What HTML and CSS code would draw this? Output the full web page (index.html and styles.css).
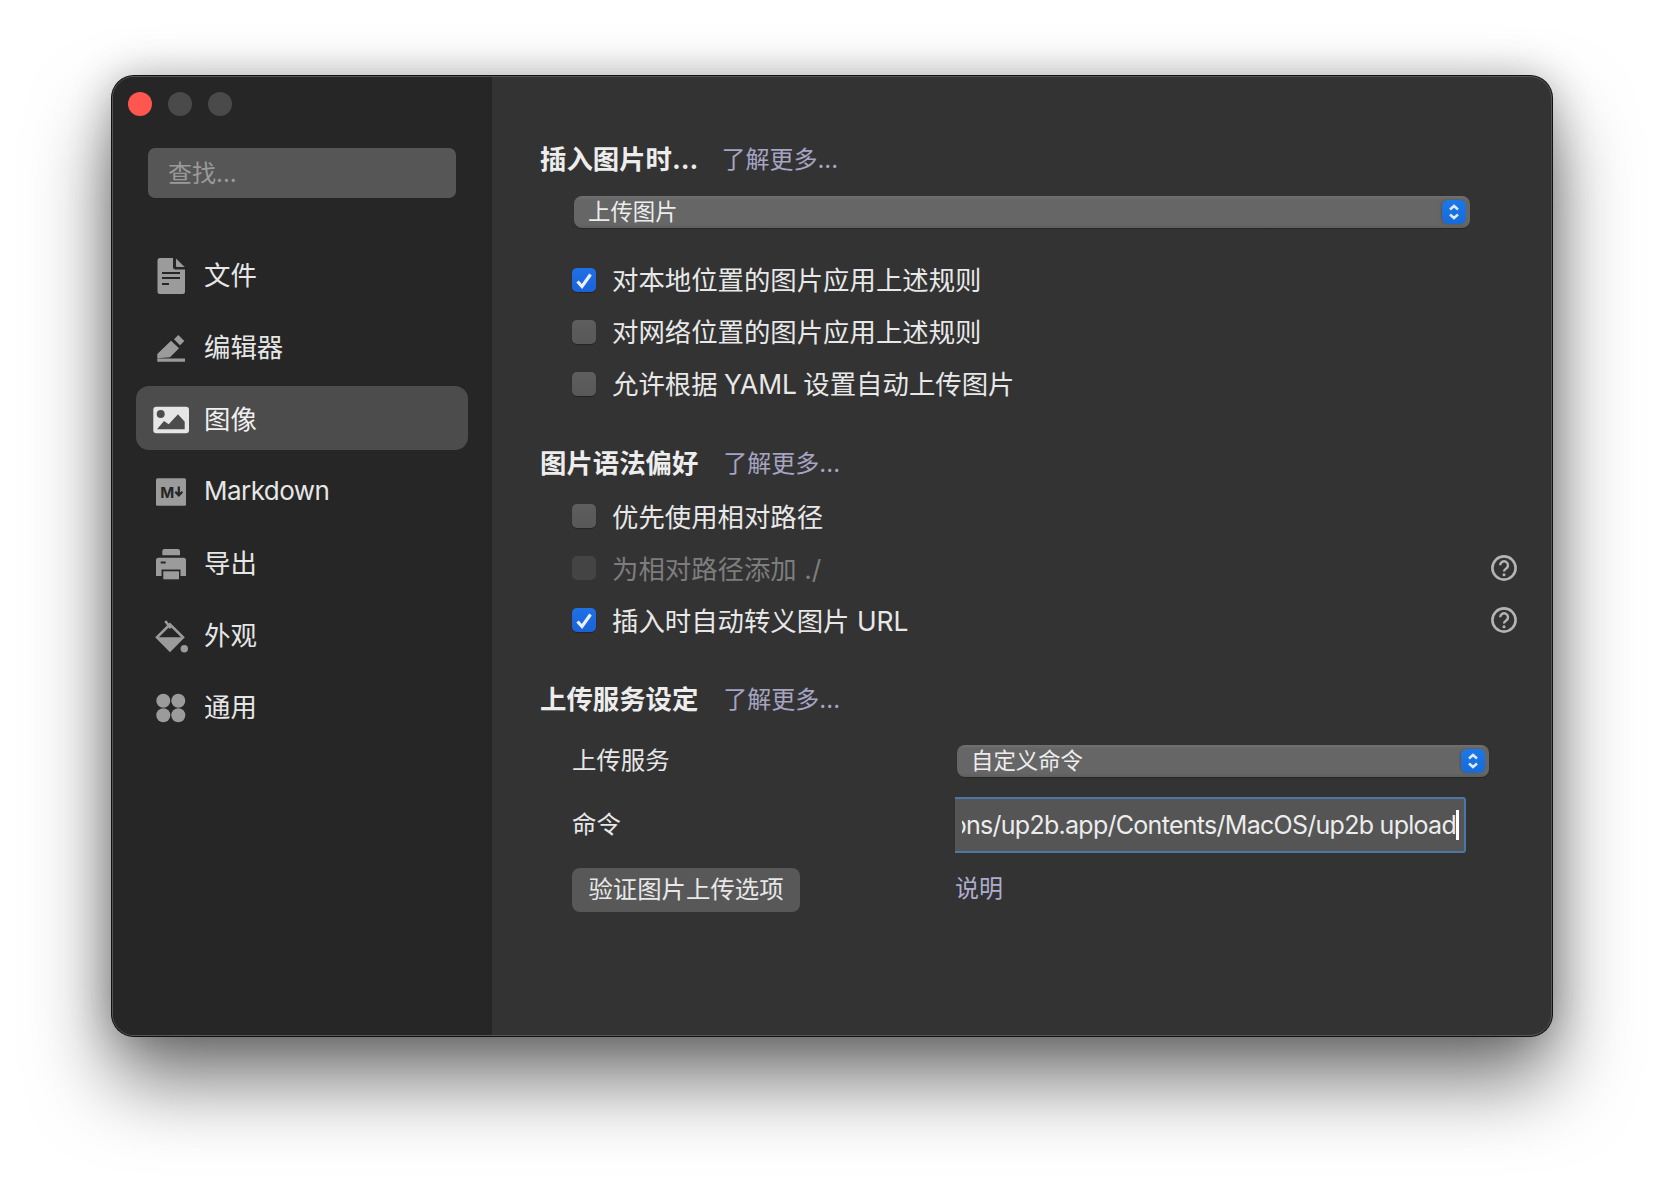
FILE: index.html
```html
<!DOCTYPE html>
<html lang="zh-CN">
<head>
<meta charset="utf-8">
<title>偏好设置</title>
<link rel="stylesheet" href="styles.css">
</head>
<body>
<div class="window">
  <aside class="sidebar">
    <div class="lights"><span class="light red"></span><span class="light"></span><span class="light"></span></div>
    <div class="search">查找...</div>
    <nav class="nav">
      <div class="nav-row">
        <svg class="nav-icon" viewBox="0 0 40 44"><path class="ic" d="M9 6h13v9a2.5 2.5 0 0 0 2.5 2.5H34v22a2.5 2.5 0 0 1-2.5 2.5H9a2.5 2.5 0 0 1-2.5-2.500V8.500A2.500 2.500 0 0 1 9 6z"/><path class="ic" d="M25 6.500L33.700 15H26a1 1 0 0 1-1-1z"/><path class="ic-cut" d="M11 21h18M11 26h18M11 32h7"/></svg>
        <span class="nav-label">文件</span>
      </div>
      <div class="nav-row">
        <svg class="nav-icon" viewBox="0 0 40 44"><path class="ic" d="M6.300 34.300V30L20 16.700l8 7.600-9 9zM23 15.300l4.300-4.300 6 6-4.300 4.300zM6.300 34.500H34v3.200H6.300z"/></svg>
        <span class="nav-label">编辑器</span>
      </div>
      <div class="nav-row active">
        <svg class="nav-icon" viewBox="0 0 40 44"><rect class="ic-on" x="2.300" y="10.700" width="35.700" height="26.600" rx="3"/><circle class="ic-hole" cx="9.700" cy="18" r="4"/><path class="ic-hole" d="M6 33.300L13 25l4.700 3.300 9.300-10 6.700 7.400v7.600z"/></svg>
        <span class="nav-label">图像</span>
      </div>
      <div class="nav-row">
        <svg class="nav-icon" viewBox="0 0 40 44"><rect class="ic" x="5" y="10.300" width="30" height="27.400" rx="1.500"/><text class="md-m" x="9.200" y="29.500">M</text><path class="ic-cut thin" d="M27.800 18.500v8.500M24.300 23.800l3.500 3.700 3.500-3.700"/></svg>
        <span class="nav-latin">Markdown</span>
      </div>
      <div class="nav-row">
        <svg class="nav-icon" viewBox="0 0 40 44"><path class="ic" d="M13.500 9h13.300a2.200 2.200 0 0 1 2.200 2.200v4.100H11.300v-4.100A2.200 2.200 0 0 1 13.500 9z"/><path class="ic" d="M7.500 17.700h25a2.500 2.500 0 0 1 2.500 2.500V36H29.500v-6.500H10.500V36H5V20.200a2.500 2.500 0 0 1 2.500-2.500z"/><rect class="ic" x="12.300" y="31.300" width="15.700" height="8"/><path class="ic-cut" d="M9.700 22.500h5"/></svg>
        <span class="nav-label">导出</span>
      </div>
      <div class="nav-row">
        <svg class="nav-icon" viewBox="0 0 40 44"><path class="ic-line" d="M19 12.300L32 25.300 19 38.300 6 25.300z"/><path class="ic" d="M7 25.300h24L19 38.700z"/><path class="ic-line" d="M14.300 9l5.400 7.300"/><circle class="ic" cx="33.300" cy="36.700" r="3.700"/></svg>
        <span class="nav-label">外观</span>
      </div>
      <div class="nav-row">
        <svg class="nav-icon" viewBox="0 0 40 44"><circle class="ic" cx="12.300" cy="16.700" r="7"/><circle class="ic" cx="27.300" cy="16.700" r="7"/><circle class="ic" cx="12.300" cy="31.300" r="7"/><circle class="ic" cx="27.300" cy="31.300" r="7"/></svg>
        <span class="nav-label">通用</span>
      </div>
    </nav>
  </aside>
  <main class="main">
    <div class="heading heading-1"><b>插入图片时...</b><a class="link">了解更多...</a></div>
    <div class="select select-wide">
      <span>上传图片</span>
      <svg class="stepper" viewBox="0 0 24 24"><path d="M8 9.500l4-3.500 4 3.500M8 14.500l4 3.500 4-3.500"/></svg>
    </div>
    <div class="rows rows-first">
      <div class="row"><span class="check on"><svg viewBox="0 0 24 24"><path d="M5.500 13.500l4.500 5 8.500-12"/></svg></span><span class="row-label">对本地位置的图片应用上述规则</span></div>
      <div class="row"><span class="check"></span><span class="row-label">对网络位置的图片应用上述规则</span></div>
      <div class="row"><span class="check"></span><span class="row-label row-label-mixed">允许根据 YAML 设置自动上传图片</span></div>
    </div>
    <div class="heading heading-2"><b>图片语法偏好</b><a class="link">了解更多...</a></div>
    <div class="rows rows-second">
      <div class="row"><span class="check"></span><span class="row-label">优先使用相对路径</span></div>
      <div class="row disabled"><span class="check"></span><span class="row-label">为相对路径添加 ./</span>
        <svg class="help" viewBox="0 0 26 26"><circle cx="13" cy="13" r="11.600"/><path d="M9.200 10.300a3.900 3.900 0 1 1 6 3.200c-1.400.9-2.200 1.500-2.200 3"/><circle class="dot" cx="13" cy="19.800" r="1.500"/></svg>
      </div>
      <div class="row"><span class="check on"><svg viewBox="0 0 24 24"><path d="M5.500 13.500l4.500 5 8.500-12"/></svg></span><span class="row-label">插入时自动转义图片 URL</span>
        <svg class="help" viewBox="0 0 26 26"><circle cx="13" cy="13" r="11.600"/><path d="M9.200 10.300a3.900 3.900 0 1 1 6 3.200c-1.400.9-2.200 1.500-2.200 3"/><circle class="dot" cx="13" cy="19.800" r="1.500"/></svg>
      </div>
    </div>
    <div class="heading heading-3"><b>上传服务设定</b><a class="link">了解更多...</a></div>
    <div class="form">
      <span class="form-label form-label-top">上传服务</span>
      <div class="select select-service">
        <span>自定义命令</span>
        <svg class="stepper" viewBox="0 0 24 24"><path d="M8 9.500l4-3.500 4 3.500M8 14.500l4 3.500 4-3.500"/></svg>
      </div>
      <span class="form-label">命令</span>
      <div class="input"><div class="input-clip"><span class="input-text">/Applications/up2b.app/Contents/MacOS/up2b upload</span></div><span class="caret"></span></div>
      <button class="btn"><span class="btn-text">验证图片上传选项</span></button>
      <a class="link link-doc">说明</a>
    </div>
  </main>
</div>
</body>
</html>
```
FILE: styles.css
```css
* { box-sizing: border-box; }
html, body { margin: 0; height: 100%; }
body {
  background: #fff;
  padding: 76px 112px;
  font-family: Inter, "Noto Sans CJK SC", sans-serif;
  color: #e8e8e8;
  overflow: hidden;
}
.window {
  width: 1440px;
  height: 960px;
  display: flex;
  border: 1px solid #565656;
  border-radius: 22px;
  overflow: hidden;
  background: #333;
  box-shadow: 0 0 0 1px #111, 0 44px 80px rgba(0,0,0,.55), 0 0 40px rgba(0,0,0,.25);
}
.sidebar {
  width: 379px;
  flex: none;
  background: #262626;
  display: flex;
  flex-direction: column;
}
.lights { display: flex; gap: 16px; padding: 15px 0 0 15px; }
.light { width: 24px; height: 24px; border-radius: 50%; background: #4a4a4a; }
.light.red { background: #ff5650; }
.search {
  margin: 32px 0 0 35px;
  width: 308px;
  height: 50px;
  border-radius: 7px;
  background: #565656;
  color: #9a9a9a;
  font-size: 24px;
  line-height: 52px;
  padding-left: 20px;
}
.nav { display: flex; flex-direction: column; gap: 8px; margin: 44px 0 0 23px; width: 332px; }
.nav-row {
  height: 64px;
  display: flex;
  align-items: center;
  gap: 13px;
  padding-left: 15px;
  border-radius: 13px;
  font-size: 26.4px;
  color: #e6e6e6;
}
.nav-label { padding-bottom: 2px; }
.nav-latin { font-size: 26px; letter-spacing: -.55px; }
.nav-row.active { background: #4c4c4c; color: #f0f0f0; }
.nav-icon { width: 40px; height: 44px; flex: none; }
.ic { fill: #9b9b9b; }
.ic-on { fill: #e6e6e6; }
.ic-hole { fill: #4c4c4c; }
.ic-cut { fill: none; stroke: #262626; stroke-width: 2; }
.ic-cut.thin { stroke-width: 2.2; }
.ic-line { fill: none; stroke: #9b9b9b; stroke-width: 2.6; }
.md-m { font: 700 15px Inter, sans-serif; fill: #262626; }

.main { flex: 1; padding: 67px 34px 0 48px; min-width: 0; }
.heading { display: flex; align-items: center; height: 32px; font-size: 26.4px; line-height: 32px; }
.heading b { font-weight: 700; color: #ededed; margin-right: 25px; padding-bottom: 2px; }
.heading-1 b { margin-right: 23px; }
.heading-2 { margin-top: 38px; }
.heading-3 { margin-top: 38px; }
.link { color: #a6a4c2; font-size: 24px; }

.select {
  position: relative;
  height: 32px;
  border-radius: 8px;
  background: linear-gradient(#707070, #666 12%, #666 88%, #5e5e5e);
  color: #ededed;
  font-size: 22.4px;
  line-height: 32px;
  padding-left: 14px;
  box-shadow: 0 1px 1px rgba(0,0,0,.25);
}
.select-wide { margin: 20px 0 0 34px; width: 896px; }
.select-service { margin-left: 2px; width: 532px; align-self: start; }
.stepper {
  position: absolute;
  right: 4px;
  top: 4px;
  width: 24px;
  height: 24px;
  border-radius: 6px;
  background: linear-gradient(#1c78e6, #176bd8);
  box-shadow: -1px 0 2px rgba(0,0,0,.2);
}
.stepper path { fill: none; stroke: #dbe9fc; stroke-width: 2.5; }

.rows { margin-left: 32px; display: flex; flex-direction: column; }
.rows-first { margin-top: 26px; }
.rows-second { margin-top: 10px; }
.row { height: 52px; display: flex; align-items: center; font-size: 26.4px; color: #e8e8e8; }
.row-label { padding-bottom: 3px; }
.rows-second .row-label { padding-bottom: 1px; }
.row-label-mixed { word-spacing: -1px; }
.row.disabled { color: #7d7d7d; }
.check {
  width: 24px;
  height: 24px;
  border-radius: 5px;
  margin-right: 16px;
  flex: none;
  background: linear-gradient(#5e5e5e, #585858);
  box-shadow: 0 1px 1px rgba(0,0,0,.3);
}
.check.on { background: linear-gradient(#2070e6, #1a62d8); }
.check svg { display: block; width: 24px; height: 24px; }
.check path { fill: none; stroke: #e8f0fe; stroke-width: 3.2; }
.disabled .check { background: #444; box-shadow: none; }
.help { width: 26px; height: 26px; margin-left: auto; flex: none; }
.help circle { fill: none; stroke: #b4b4b4; stroke-width: 2.600; }
.help path { fill: none; stroke: #b4b4b4; stroke-width: 2.400; }
.help .dot { fill: #b4b4b4; stroke: none; }

.form {
  margin: 29px 0 0 32px;
  display: grid;
  grid-template-columns: 383px 511px;
  grid-template-rows: 52px 71px 44px;
  font-size: 24.4px;
}
.form-label { color: #e8e8e8; line-height: 54px; height: 56px; }
.form-label-top { line-height: 30px; height: 30px; }
.input {
  height: 56px;
  display: flex;
  align-items: center;
  background: #555;
  border: 2px solid #4a76a8;
  border-left: none;
  border-radius: 0 3px 3px 0;
  padding: 0 5px 0 7px;
  font-size: 25px;
  letter-spacing: -.72px;
  color: #ececec;
}
.input-clip { flex: 1; min-width: 0; overflow: hidden; display: flex; justify-content: flex-end; }
.input-text { white-space: nowrap; flex: none; }
.caret { width: 3px; height: 30px; background: #fff; flex: none; }
.btn {
  width: 228px;
  height: 44px;
  border: none;
  border-radius: 8px;
  background: #585858;
  color: #e8e8e8;
  font: 24.4px Inter, "Noto Sans CJK SC", sans-serif;
  padding: 0;
}
.btn-text { display: block; line-height: 43px; height: 44px; }
.link-doc { line-height: 42px; height: 42px; color: #aeacce; }
```
